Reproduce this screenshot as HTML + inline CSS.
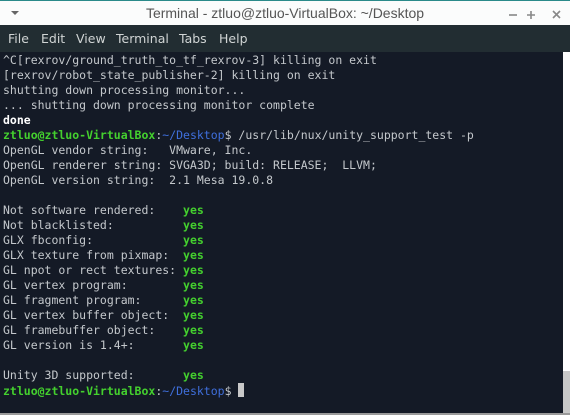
<!DOCTYPE html>
<html><head><meta charset="utf-8"><style>
html,body{margin:0;padding:0;width:570px;height:415px;overflow:hidden;background:#141a26;}
.title{position:absolute;left:0;top:0;width:570px;height:25px;background:#fbfcfc;border-top:1px solid #2a8a8a;box-sizing:border-box;font:14px "Liberation Sans","DejaVu Sans",sans-serif;color:#555;}
.title .t{position:absolute;left:0;width:570px;top:4px;text-align:center;}
.title .arrow{position:absolute;left:11px;top:10px;width:0;height:0;border-left:4px solid transparent;border-right:4px solid transparent;border-top:4px solid #666;}
.menu{position:absolute;left:0;top:25px;width:570px;height:27px;background:#222d32;font:12.5px "DejaVu Sans",sans-serif;color:#d0d4d4;display:flex;padding-left:8px;box-sizing:border-box;padding-top:6px;white-space:nowrap;}
.menu i{font-style:normal;display:block;flex:none;}
.term{position:absolute;left:3px;top:53px;font:11.5px/15px "DejaVu Sans Mono",monospace;color:#c4c8cc;white-space:pre;}
.g{color:#44d02e;font-weight:bold;}
.b{color:#3f6fdc;}
.w{color:#fff;font-weight:bold;}
.sb{position:absolute;left:563px;top:52px;width:7px;height:361px;background:#fff;}
.thumb{position:absolute;left:563px;top:371px;width:7px;height:42px;background:#c8c8c8;}
.bot{position:absolute;left:0;top:413px;width:570px;height:2px;background:#9a9a9a;}
.cur{display:inline-block;width:6px;height:14px;background:#c8c8c8;vertical-align:-2px;}
</style></head><body>
<div class="title"><div class="arrow"></div><div class="t">Terminal - ztluo@ztluo-VirtualBox: ~/Desktop</div>
<svg style="position:absolute;left:505px;top:8px" width="60" height="12"><g stroke="#888" stroke-width="1.6" fill="none"><path d="M4 6h8"/><path d="M26 2v8M22 6h8"/><path d="M48 2l7 7M55 2l-7 7"/></g></svg></div>
<div class="menu"><i style="width:33px">File</i><i style="width:35px">Edit</i><i style="width:40px">View</i><i style="width:63px">Terminal</i><i style="width:40px">Tabs</i><i>Help</i></div>
<div class="term">^C[rexrov/ground_truth_to_tf_rexrov-3] killing on exit
[rexrov/robot_state_publisher-2] killing on exit
shutting down processing monitor...
... shutting down processing monitor complete
<span class="w">done</span>
<span class="g">ztluo@ztluo-VirtualBox</span>:<span class="b">~/Desktop</span>$ /usr/lib/nux/unity_support_test -p
OpenGL vendor string:   VMware, Inc.
OpenGL renderer string: SVGA3D; build: RELEASE;  LLVM;
OpenGL version string:  2.1 Mesa 19.0.8

Not software rendered:    <span class="g">yes</span>
Not blacklisted:          <span class="g">yes</span>
GLX fbconfig:             <span class="g">yes</span>
GLX texture from pixmap:  <span class="g">yes</span>
GL npot or rect textures: <span class="g">yes</span>
GL vertex program:        <span class="g">yes</span>
GL fragment program:      <span class="g">yes</span>
GL vertex buffer object:  <span class="g">yes</span>
GL framebuffer object:    <span class="g">yes</span>
GL version is 1.4+:       <span class="g">yes</span>

Unity 3D supported:       <span class="g">yes</span>
<span class="g">ztluo@ztluo-VirtualBox</span>:<span class="b">~/Desktop</span>$ <span class="cur"></span></div>
<div class="sb"></div><div class="thumb"></div><div class="bot"></div>
</body></html>
